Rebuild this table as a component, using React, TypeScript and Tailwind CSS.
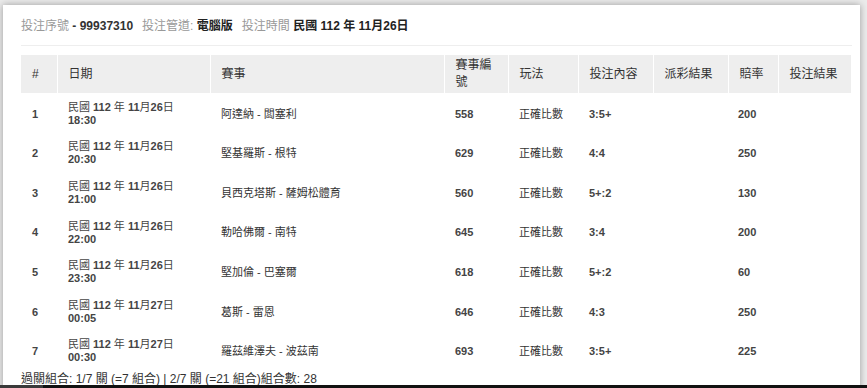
import React from "react";

const rows = [
  ["1", "民國 112 年 11月26日", "18:30", "阿達納 - 闆塞利", "558", "正確比數", "3:5+", "200"],
  ["2", "民國 112 年 11月26日", "20:30", "堅基羅斯 - 根特", "629", "正確比數", "4:4", "250"],
  ["3", "民國 112 年 11月26日", "21:00", "貝西克塔斯 - 薩姆松體育", "560", "正確比數", "5+:2", "130"],
  ["4", "民國 112 年 11月26日", "22:00", "勒哈佛爾 - 南特", "645", "正確比數", "3:4", "200"],
  ["5", "民國 112 年 11月26日", "23:30", "堅加倫 - 巴塞爾", "618", "正確比數", "5+:2", "60"],
  ["6", "民國 112 年 11月27日", "00:05", "葛斯 - 雷恩", "646", "正確比數", "4:3", "250"],
  ["7", "民國 112 年 11月27日", "00:30", "羅茲維澤夫 - 波茲南", "693", "正確比數", "3:5+", "225"],
];

const widths = [36, 153, 234, 64, 70, 75, 75, 50, 73];
const heads = ["#", "日期", "賽事", "賽事編號", "玩法", "投注內容", "派彩結果", "賠率", "投注結果"];

function MixedBold({ text }: { text: string }) {
  const parts = text.split(/([\u3400-\u9fff]+)/).filter((p) => p.length > 0);
  return (
    <>
      {parts.map((p, i) =>
        /[\u3400-\u9fff]/.test(p) ? (
          <span key={i} className="font-normal">
            {p}
          </span>
        ) : (
          <span key={i} className="font-bold">
            {p}
          </span>
        )
      )}
    </>
  );
}

const td = "px-[11px] align-middle text-[11px] pt-[6.8px] pb-[4.8px]";

export default function App() {
  return (
    <div
      className="relative w-[867px] h-[388px] overflow-hidden bg-[#ebebeb] text-[#333]"
      style={{ fontFamily: '"Liberation Sans", Arial, "Noto Sans CJK TC", sans-serif' }}
    >
      <div className="ml-[3px] mt-[5px] w-[857px] h-[400px] bg-white shadow-[0_0_7px_rgba(0,0,0,0.35)] pl-[18px] pr-[8px] pt-[11px]">
        <div className="text-[12px] leading-[20px] whitespace-nowrap">
          <span className="text-[#999]">投注序號</span>{" "}
          <b className="text-[#333]">- 99937310</b>
          <span className="ml-[9px] text-[#999]">投注管道:</span>{" "}
          <b className="text-[#222]">電腦版</b>
          <span className="ml-[9px] text-[#999]">投注時間</span>{" "}
          <b className="text-[#222]">民國 112 年 11月26日</b>
        </div>
        <div className="mt-[9px] h-px w-[831px] bg-[#eeeeee]" />
        <table className="mt-[9px] w-[830px] table-fixed border-collapse">
          <colgroup>
            {widths.map((w, i) => (
              <col key={i} style={{ width: w }} />
            ))}
          </colgroup>
          <thead>
            <tr className="bg-[#eeeeee] h-[38px]">
              {heads.map((h, i) => (
                <th
                  key={i}
                  className={`text-left font-normal text-[12px] leading-[17px] px-[11px] py-[2px] align-middle text-[#333] ${
                    i > 0 ? "border-l border-white" : ""
                  }`}
                >
                  {h}
                </th>
              ))}
            </tr>
          </thead>
          <tbody>
            {rows.map((r) => (
              <tr key={r[0]} className="h-[39.6px]">
                <td className={`${td} font-bold text-[#444]`}>{r[0]}</td>
                <td className={`${td} leading-[13px] text-[#444]`}>
                  <div>
                    <MixedBold text={r[1]} />
                  </div>
                  <div className="font-bold">{r[2]}</div>
                </td>
                <td className={td}>{r[3]}</td>
                <td className={`${td} font-bold text-[#444]`}>{r[4]}</td>
                <td className={td}>{r[5]}</td>
                <td className={`${td} font-bold text-[#444]`}>{r[6]}</td>
                <td className={td}></td>
                <td className={`${td} !px-[10px] font-bold text-[#444]`}>{r[7]}</td>
                <td className={td}></td>
              </tr>
            ))}
          </tbody>
        </table>
        <div className="text-[12px] leading-[18px] whitespace-nowrap text-[#333]">
          過關組合: 1/7 關 (=7 組合) | 2/7 關 (=21 組合)組合數: 28
        </div>
      </div>
      <div className="absolute left-0 bottom-0 w-full h-[3px] flex">
        <div className="w-[43px] h-full bg-[#3a3a3a]" />
        <div className="flex-1 h-full bg-[#111]" />
      </div>
    </div>
  );
}
